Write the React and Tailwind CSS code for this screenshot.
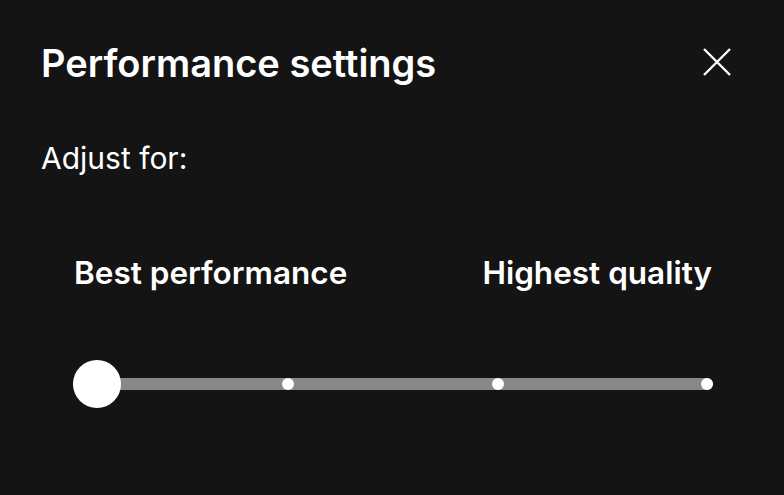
export default function App() {
  const ticks = [0, 1, 2, 3]

  return (
    <div
      className="w-full h-[495px] bg-[#141414] text-white px-[41px] pt-10 overflow-hidden"
      style={{ fontFamily: 'Inter, "Noto Sans", sans-serif' }}
    >
      {/* header */}
      <div className="flex items-start justify-between">
        <h1 className="text-[38px] leading-[46px] font-semibold">Performance settings</h1>
        <button className="mt-2 mr-3" aria-label="Close">
          <svg width="28" height="28" viewBox="0 0 28 28" fill="none" stroke="white" strokeWidth="2.4" strokeLinecap="butt">
            <path d="M1 1L27 27M27 1L1 27" />
          </svg>
        </button>
      </div>

      <p className="mt-[54px] text-[30px] leading-[36px]">Adjust for:</p>

      {/* labels */}
      <div className="mt-[78px] ml-[33px] mr-[31px] flex justify-between text-[31.5px] leading-[38px] font-semibold">
        <span>Best performance</span>
        <span>Highest quality</span>
      </div>

      {/* slider */}
      <div className="mt-[68px] ml-8 mr-[30px] h-12 relative flex items-center">
        <div className="relative w-full h-3 rounded-full bg-[#888888]">
          {ticks.map((i) => (
            <span
              key={i}
              className="absolute top-0 w-3 h-3 rounded-full bg-white"
              style={{ left: `calc(${(i / 3) * 100}% - ${i * 4}px)` }}
            />
          ))}
        </div>
        <div className="absolute left-0 top-0 w-12 h-12 rounded-full bg-white" />
      </div>
    </div>
  )
}
